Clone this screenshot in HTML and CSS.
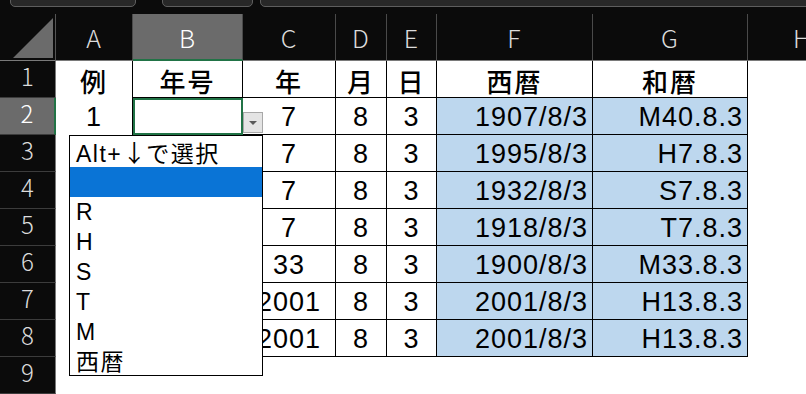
FILE: index.html
```html
<!DOCTYPE html>
<html lang="ja">
<head>
    <meta charset="UTF-8">
    <meta name="viewport" content="width=device-width, initial-scale=1.0">
    <title>和暦変換</title>
    <link rel="stylesheet" href="styles.css">
</head>
<body>
    <div class="window">
        <div class="toolbar">
            <div class="pill pill-name"></div>
            <div class="pill pill-btn"></div>
            <div class="pill pill-formula"></div>
        </div>

        <div class="sheet">
            <!-- 見出し行 -->
            <div class="corner">
                <svg width="56" height="47" viewBox="0 0 56 47"><polygon points="13,44 53,4 53,44" fill="#6b6b6b"/></svg>
            </div>
            <div class="ch">A</div>
            <div class="ch ch-active">B</div>
            <div class="ch">C</div>
            <div class="ch">D</div>
            <div class="ch">E</div>
            <div class="ch">F</div>
            <div class="ch">G</div>
            <div class="ch ch-last">H</div>

            <!-- 1 -->
            <div class="rh">1</div>
            <div class="cell cell-a jp">例</div>
            <div class="cell jp">年号</div>
            <div class="cell jp">年</div>
            <div class="cell jp">月</div>
            <div class="cell jp">日</div>
            <div class="cell jp">西暦</div>
            <div class="cell jp">和暦</div>
            <div class="blank"></div>

            <!-- 2 -->
            <div class="rh rh-active">2</div>
            <div class="cell cell-a">1</div>
            <div class="cell selected">
                <div class="drop-btn"><span class="tri"></span></div>
            </div>
            <div class="cell">7</div>
            <div class="cell">8</div>
            <div class="cell">3</div>
            <div class="cell blue right">1907/8/3</div>
            <div class="cell blue right">M40.8.3</div>
            <div class="blank"></div>

            <!-- 3 -->
            <div class="rh">3</div>
            <div class="cell cell-a"></div>
            <div class="cell"></div>
            <div class="cell">7</div>
            <div class="cell">8</div>
            <div class="cell">3</div>
            <div class="cell blue right">1995/8/3</div>
            <div class="cell blue right">H7.8.3</div>
            <div class="blank"></div>

            <!-- 4 -->
            <div class="rh">4</div>
            <div class="cell cell-a"></div>
            <div class="cell"></div>
            <div class="cell">7</div>
            <div class="cell">8</div>
            <div class="cell">3</div>
            <div class="cell blue right">1932/8/3</div>
            <div class="cell blue right">S7.8.3</div>
            <div class="blank"></div>

            <!-- 5 -->
            <div class="rh">5</div>
            <div class="cell cell-a"></div>
            <div class="cell"></div>
            <div class="cell">7</div>
            <div class="cell">8</div>
            <div class="cell">3</div>
            <div class="cell blue right">1918/8/3</div>
            <div class="cell blue right">T7.8.3</div>
            <div class="blank"></div>

            <!-- 6 -->
            <div class="rh">6</div>
            <div class="cell cell-a"></div>
            <div class="cell"></div>
            <div class="cell">33</div>
            <div class="cell">8</div>
            <div class="cell">3</div>
            <div class="cell blue right">1900/8/3</div>
            <div class="cell blue right">M33.8.3</div>
            <div class="blank"></div>

            <!-- 7 -->
            <div class="rh">7</div>
            <div class="cell cell-a"></div>
            <div class="cell"></div>
            <div class="cell">2001</div>
            <div class="cell">8</div>
            <div class="cell">3</div>
            <div class="cell blue right">2001/8/3</div>
            <div class="cell blue right">H13.8.3</div>
            <div class="blank"></div>

            <!-- 8 -->
            <div class="rh">8</div>
            <div class="cell cell-a"></div>
            <div class="cell"></div>
            <div class="cell">2001</div>
            <div class="cell">8</div>
            <div class="cell">3</div>
            <div class="cell blue right">2001/8/3</div>
            <div class="cell blue right">H13.8.3</div>
            <div class="blank"></div>

            <!-- 9 -->
            <div class="rh">9</div>
            <div class="blank"></div>
            <div class="blank"></div>
            <div class="blank"></div>
            <div class="blank"></div>
            <div class="blank"></div>
            <div class="blank"></div>
            <div class="blank"></div>
            <div class="blank"></div>

            <!-- 入力規則のリスト -->
            <ul class="dropdown">
                <li class="hint">Alt+<span class="arrow">↓</span>で選択</li>
                <li class="active"></li>
                <li>R</li>
                <li>H</li>
                <li>S</li>
                <li>T</li>
                <li>M</li>
                <li>西暦</li>
            </ul>
        </div>
    </div>
</body>
</html>
```

FILE: styles.css
```css
* {
    margin: 0;
    padding: 0;
    box-sizing: border-box;
}

body {
    background: #fff;
    font-family: "Liberation Sans", "Noto Sans CJK JP", sans-serif;
}

.window {
    width: 806px;
    height: 394px;
    overflow: hidden;
    background: #fff;
}

/* 上の数式バーの切れ端 */
.toolbar {
    display: flex;
    gap: 26px;
    height: 14px;
    padding-left: 10px;
    background: #0b0b0b;
}

.pill {
    height: 13px;
    margin-top: -6px;
    background: #282828;
    border: 1px solid #5e5e5e;
    border-radius: 5px;
}

.pill-name { width: 126px; }
.pill-btn { width: 91px; }
.pill-formula { flex: 1; margin-left: -19px; margin-right: -10px; }

/* シート */
.sheet {
    position: relative;
    display: grid;
    grid-template-columns: 56px 77px 110px 93px 51px 50px 156px 155px 1fr;
    grid-template-rows: 47px repeat(9, 37px);
}

.corner {
    background: #0b0b0b;
    border-right: 1px solid #555;
    border-bottom: 1px solid #7a7a7a;
}

.corner svg {
    display: block;
}

.ch {
    display: flex;
    align-items: center;
    justify-content: center;
    background: #0b0b0b;
    color: #dcdcdc;
    border-right: 1px solid #4a4a4a;
    border-bottom: 1px solid #7a7a7a;
    font-family: "Noto Sans CJK JP", "Noto Sans", sans-serif;
    font-weight: 300;
    font-size: 25px;
    letter-spacing: 1px;
}

.ch-active {
    background: #6b6b6b;
    color: #fff;
    border-bottom: 2px solid #217346;
}

.ch-last {
    border-right: none;
    justify-content: flex-start;
    padding-left: 45px;
}

.rh {
    display: flex;
    align-items: center;
    justify-content: center;
    padding-bottom: 8px;
    background: #0b0b0b;
    color: #dcdcdc;
    border-right: 1px solid #7a7a7a;
    border-bottom: 1px solid #3c3c3c;
    font-family: "Noto Sans CJK JP", "Noto Sans", sans-serif;
    font-weight: 300;
    font-size: 24px;
}

.rh-active {
    background: #6b6b6b;
    color: #fff;
    border-right: 2px solid #217346;
}

.cell {
    position: relative;
    display: flex;
    align-items: center;
    justify-content: center;
    padding-top: 2px;
    border-right: 1px solid #000;
    border-bottom: 1px solid #000;
    color: #000;
    font-size: 27px;
    letter-spacing: 1px;
}

.cell.jp {
    font-family: "Noto Sans CJK JP", sans-serif;
    font-weight: 500;
    font-size: 26px;
    letter-spacing: 2px;
}

.cell-a {
    border-bottom: none;
}

.blue {
    background: #bdd7ee;
}

.right {
    justify-content: flex-end;
    padding-right: 4px;
}

.selected {
    outline: 2px solid #217346;
    outline-offset: -2px;
}

.blank {
    background: #fff;
}

/* ドロップダウンの▼ボタン */
.drop-btn {
    position: absolute;
    left: 110px;
    top: 14px;
    width: 20px;
    height: 21px;
    background: #e4e4e4;
    border: 1px solid #a8a8a8;
    display: flex;
    align-items: center;
    justify-content: center;
}

.tri {
    width: 0;
    height: 0;
    border-left: 4px solid transparent;
    border-right: 4px solid transparent;
    border-top: 4px solid #5a5a5a;
}

/* リスト */
.dropdown {
    position: absolute;
    left: 69px;
    top: 121px;
    width: 194px;
    height: 241px;
    list-style: none;
    background: #fff;
    border: 1px solid #000;
    padding-top: 1px;
}

.dropdown li {
    height: 30px;
    padding-left: 6px;
    line-height: 30px;
    font-size: 23px;
    letter-spacing: 1.5px;
    color: #000;
}

.dropdown .arrow {
    font-family: "Noto Sans CJK JP", sans-serif;
    font-size: 24px;
    letter-spacing: 0;
}

.dropdown .active {
    background: #0a74d6;
}
```
